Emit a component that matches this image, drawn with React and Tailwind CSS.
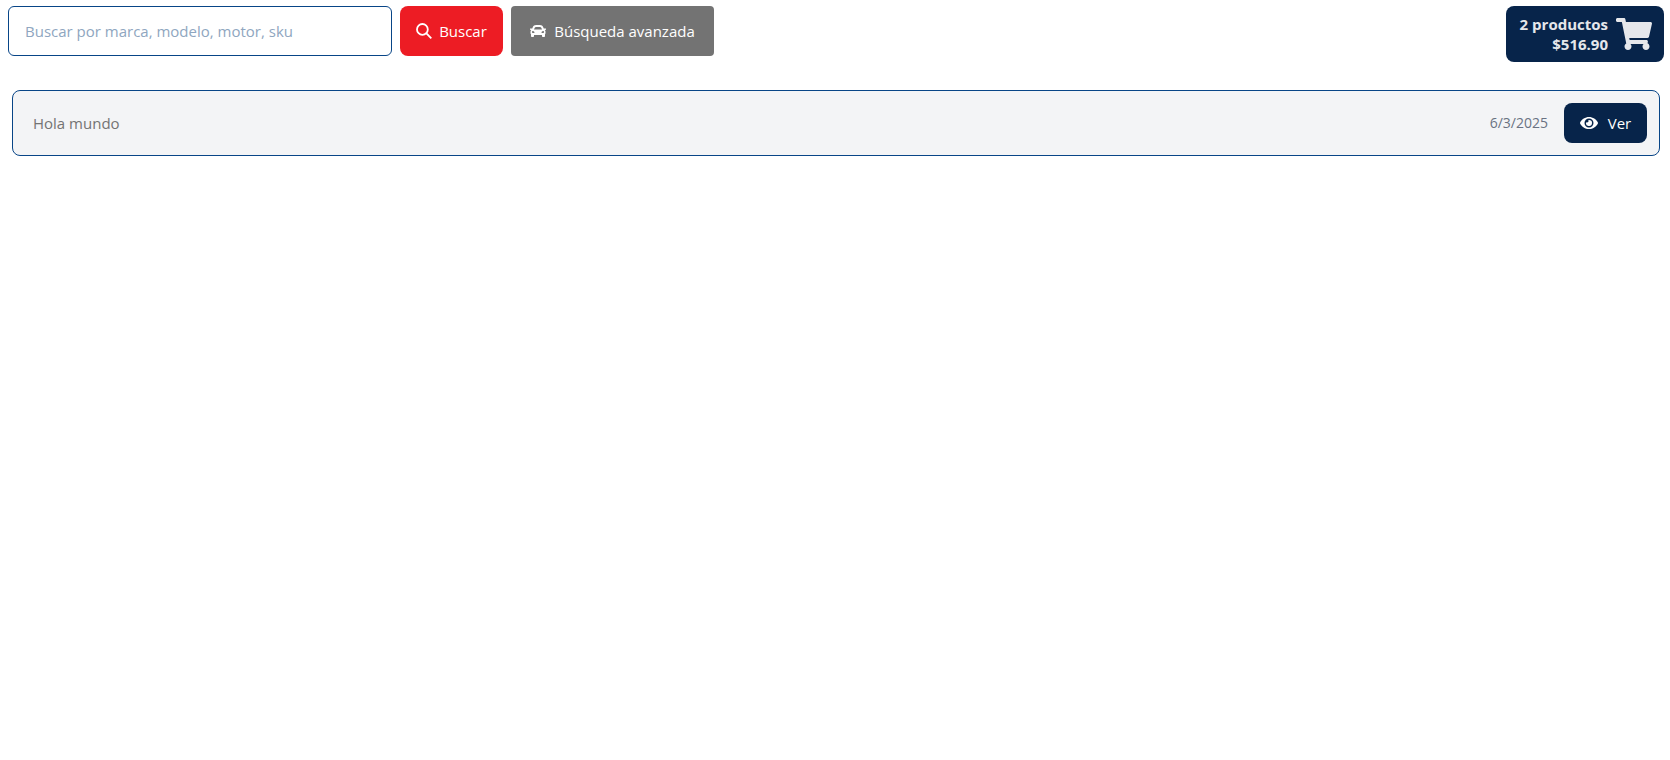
import { FaCar, FaShoppingCart, FaEye } from "react-icons/fa";

function SearchIcon() {
  return (
    <svg viewBox="0 0 16 16" className="size-4" fill="none" stroke="currentColor" strokeWidth="1.8" aria-hidden="true">
      <circle cx="6.4" cy="6.4" r="5.4" />
      <path d="M10.2 10.2 15.3 15.3" />
    </svg>
  );
}

function SearchBar() {
  return (
    <form className="flex items-center gap-2" onSubmit={(e) => e.preventDefault()}>
      <input
        type="text"
        aria-label="Buscar productos"
        placeholder="Buscar por marca, modelo, motor, sku"
        className="h-[50px] w-96 rounded-md border border-[#084587] bg-white px-4 text-[#084587] outline-none placeholder:text-[#8fa6c0]"
      />
      <button type="submit" className="flex h-[50px] w-[103px] items-center justify-center gap-[7px] rounded-lg bg-[#ed1c24] text-white">
        <SearchIcon />
        Buscar
      </button>
      <button type="button" className="flex h-[50px] w-[203px] items-center justify-center gap-2 rounded-sm bg-[#737373] text-white">
        <FaCar className="size-4" />
        Búsqueda avanzada
      </button>
    </form>
  );
}

function CartButton({ count, total }) {
  return (
    <button type="button" className="flex h-14 w-[158px] items-center justify-end gap-2 rounded-lg bg-[#07244a] px-3 font-bold text-gray-200">
      <span className="text-right leading-5">
        {count} productos
        <br />
        {total}
      </span>
      <FaShoppingCart className="h-8 w-9 shrink-0" />
    </button>
  );
}

function NoticeRow({ title, date }) {
  return (
    <article className="flex items-center justify-between rounded-lg border border-[#084587] bg-gray-100 py-3 pr-3 pl-5">
      <p className="text-[#737373]">{title}</p>
      <div className="flex items-center gap-4">
        <time className="text-sm text-gray-500">{date}</time>
        <button type="button" className="flex h-10 w-[83px] items-center justify-center gap-[10px] rounded-lg bg-[#07244a] text-white">
          <FaEye className="h-4 w-[18px]" />
          Ver
        </button>
      </div>
    </article>
  );
}

export default function App() {
  return (
    <div className="min-h-screen bg-white font-['Segoe_UI','Open_Sans','Noto_Sans',sans-serif] text-[15px]">
      <header className="flex items-start justify-between pt-1.5 pr-1.5 pl-2">
        <SearchBar />
        <CartButton count={2} total="$516.90" />
      </header>
      <main className="pt-7 pr-2.5 pl-3">
        <NoticeRow title="Hola mundo" date="6/3/2025" />
      </main>
    </div>
  );
}
